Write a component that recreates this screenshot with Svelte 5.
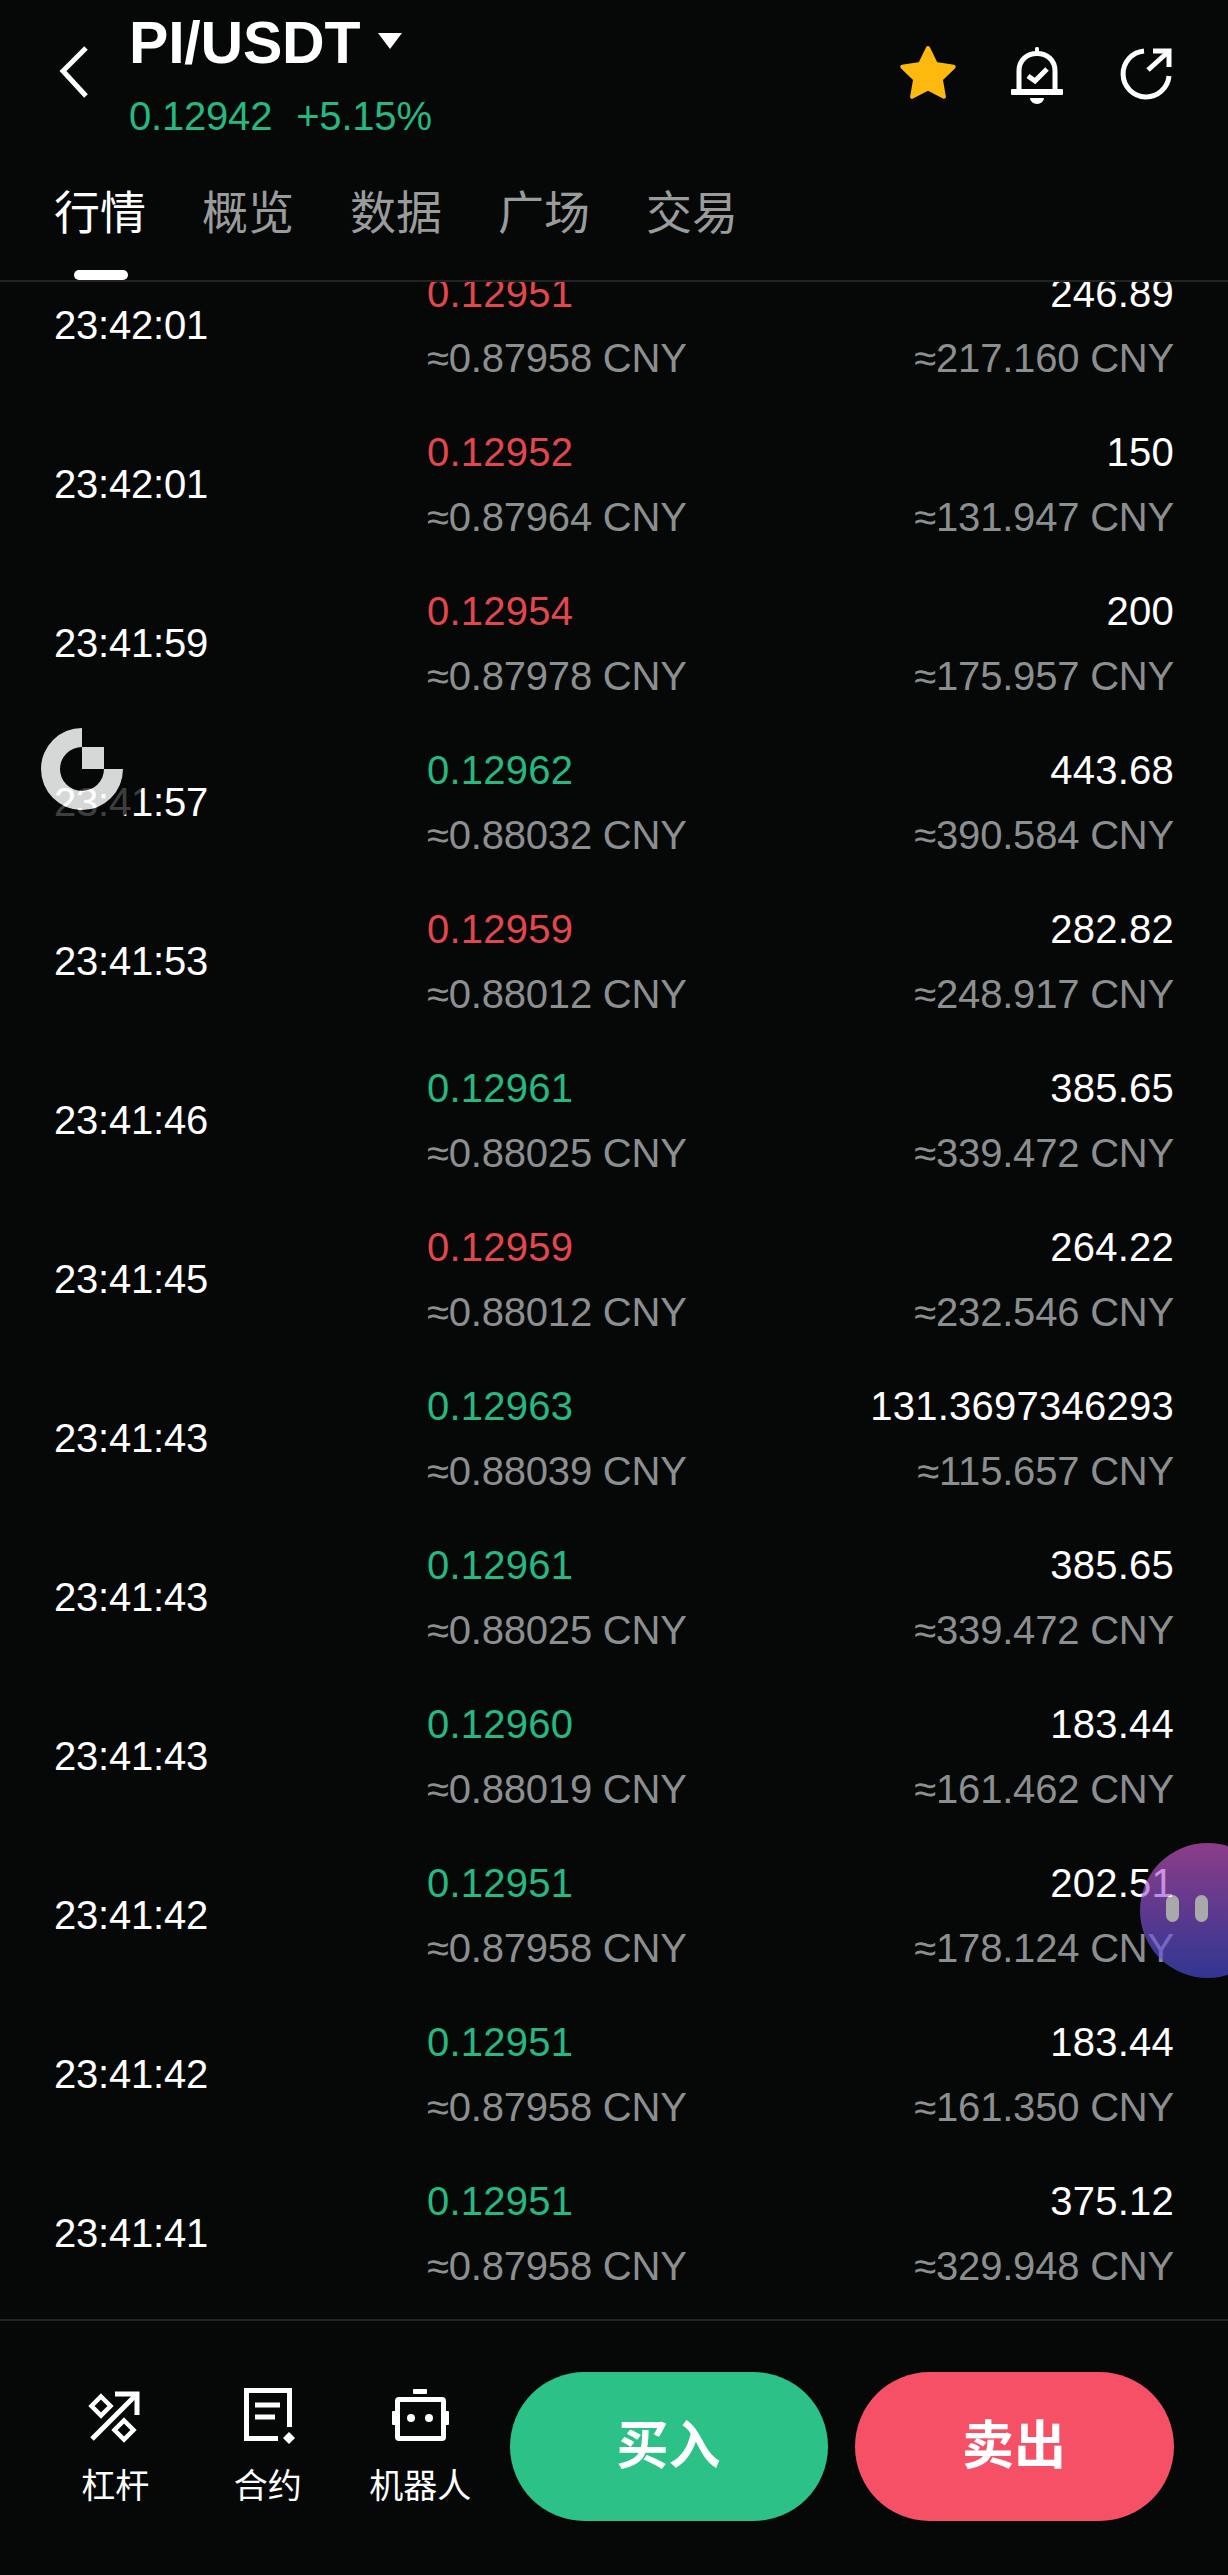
<script>
  const tabs = ["行情", "概览", "数据", "广场", "交易"];

  const trades = [
    { time: "23:42:01", price: "0.12951", side: "down", cny: "≈0.87958 CNY", amount: "246.89", total: "≈217.160 CNY" },
    { time: "23:42:01", price: "0.12952", side: "down", cny: "≈0.87964 CNY", amount: "150", total: "≈131.947 CNY" },
    { time: "23:41:59", price: "0.12954", side: "down", cny: "≈0.87978 CNY", amount: "200", total: "≈175.957 CNY" },
    { time: "23:41:57", price: "0.12962", side: "up", cny: "≈0.88032 CNY", amount: "443.68", total: "≈390.584 CNY" },
    { time: "23:41:53", price: "0.12959", side: "down", cny: "≈0.88012 CNY", amount: "282.82", total: "≈248.917 CNY" },
    { time: "23:41:46", price: "0.12961", side: "up", cny: "≈0.88025 CNY", amount: "385.65", total: "≈339.472 CNY" },
    { time: "23:41:45", price: "0.12959", side: "down", cny: "≈0.88012 CNY", amount: "264.22", total: "≈232.546 CNY" },
    { time: "23:41:43", price: "0.12963", side: "up", cny: "≈0.88039 CNY", amount: "131.3697346293", total: "≈115.657 CNY" },
    { time: "23:41:43", price: "0.12961", side: "up", cny: "≈0.88025 CNY", amount: "385.65", total: "≈339.472 CNY" },
    { time: "23:41:43", price: "0.12960", side: "up", cny: "≈0.88019 CNY", amount: "183.44", total: "≈161.462 CNY" },
    { time: "23:41:42", price: "0.12951", side: "up", cny: "≈0.87958 CNY", amount: "202.51", total: "≈178.124 CNY" },
    { time: "23:41:42", price: "0.12951", side: "up", cny: "≈0.87958 CNY", amount: "183.44", total: "≈161.350 CNY" },
    { time: "23:41:41", price: "0.12951", side: "up", cny: "≈0.87958 CNY", amount: "375.12", total: "≈329.948 CNY" }
  ];
</script>

<div class="page">
  <header class="header">
    <div class="top">
      <svg class="back" viewBox="0 0 36 56" aria-hidden="true">
        <path d="M31 5 L8 28 L31 53" />
      </svg>
      <div class="pair">
        <div class="title">
          <span>PI/USDT</span>
          <svg class="caret" viewBox="0 0 24 16" aria-hidden="true"><path d="M0 0 H24 L12 16 Z" /></svg>
        </div>
        <div class="quote"><span>0.12942</span><span>+5.15%</span></div>
      </div>
      <div class="actions">
        <svg viewBox="0 0 60 60" aria-hidden="true">
          <path class="star" d="M30 4 L37.9 20.1 L55.7 22.7 L42.8 35.2 L45.9 52.8 L30 44.5 L14.1 52.8 L17.2 35.2 L4.3 22.7 L22.1 20.1 Z" />
        </svg>
        <svg viewBox="0 0 60 60" aria-hidden="true">
          <path class="line" d="M12 46 V27 C12 16 20 9.5 30 9.5 C40 9.5 48 16 48 27 V46" />
          <rect class="solid" x="4" y="45" width="52" height="6" rx="1" />
          <rect class="solid" x="28" y="3" width="4" height="6" rx="1.5" />
          <path class="solid" d="M23 54 H37 A7 6 0 0 1 23 54 Z" />
          <path class="line" d="M21 32 L28 37 L40 25" />
        </svg>
        <svg viewBox="0 0 60 60" aria-hidden="true">
          <path class="line" d="M28 7 A23 23 0 1 0 53 32" />
          <path class="line" d="M32 26 L52 8" />
          <path class="line" d="M37 7 H53 V23" />
        </svg>
      </div>
    </div>
    <nav class="tabs">
      {#each tabs as tab, i}
        <div class="tab" class:active={i === 0}>{tab}</div>
      {/each}
    </nav>
  </header>

  <main class="list">
    <div class="rows">
      {#each trades as t}
        <div class="row">
          <div class="time">{t.time}</div>
          <div class="cell">
            <div class="main {t.side}">{t.price}</div>
            <div class="sub">{t.cny}</div>
          </div>
          <div class="cell right">
            <div class="main">{t.amount}</div>
            <div class="sub">{t.total}</div>
          </div>
        </div>
      {/each}
    </div>
  </main>

  <footer class="footer">
    <div class="tool">
      <svg viewBox="0 0 60 60" aria-hidden="true">
        <path class="line" d="M7 53 L52 8" />
        <path class="line" d="M30 8 H52 V29" />
        <path class="line thin" d="M16 10.5 L25.5 20 L16 29.5 L6.5 20 Z" />
        <path class="line thin" d="M39 34.5 L48.5 44 L39 53.5 L29.5 44 Z" />
      </svg>
      <span>杠杆</span>
    </div>
    <div class="tool">
      <svg viewBox="0 0 60 60" aria-hidden="true">
        <path class="line" d="M51.5 41 V4.5 H8.5 V52.5 H40" />
        <path class="line" d="M17 19 H42 M17 31 H37" />
        <path class="solid" d="M51 46 L57 52 L51 58 L45 52 Z" />
      </svg>
      <span>合约</span>
    </div>
    <div class="tool">
      <svg viewBox="0 0 60 60" aria-hidden="true">
        <rect class="line" x="7.5" y="13.5" width="46" height="39" rx="1.5" />
        <rect class="solid" x="23" y="3" width="14" height="5" rx="1" />
        <rect class="solid" x="2" y="25" width="5" height="14" rx="1" />
        <rect class="solid" x="54" y="25" width="5" height="14" rx="1" />
        <circle class="solid" cx="21" cy="32" r="4" />
        <circle class="solid" cx="39" cy="32" r="4" />
      </svg>
      <span>机器人</span>
    </div>
    <button class="trade buy"><span>买入</span></button>
    <button class="trade sell"><span>卖出</span></button>
  </footer>

  <div class="float-logo">
    <svg viewBox="0 0 128 128" aria-hidden="true">
      <path class="shade" fill-rule="evenodd" d="M1 64 A63 63 0 1 1 127 64 A63 63 0 1 1 1 64 Z M64 23 A41 41 0 1 0 105 64 H86 A22 22 0 1 1 64 42 Z" />
      <path class="mark" d="M64 23 A41 41 0 1 0 105 64 H86 A22 22 0 1 1 64 42 Z" />
      <rect class="mark" x="64" y="42" width="22" height="22" />
    </svg>
  </div>

  <div class="float-bot">
    <i></i><i></i>
  </div>
</div>

<style>
  :global(body) {
    margin: 0;
    background: #060808;
  }
  .page {
    position: relative;
    width: 1228px;
    height: 2575px;
    overflow: hidden;
    display: flex;
    flex-direction: column;
    background: #060808;
    color: #fff;
    font-family: "Liberation Sans", "Noto Sans CJK SC", sans-serif;
    font-size: 40px;
  }
  .header {
    flex: none;
    height: 282px;
    box-sizing: border-box;
    border-bottom: 2px solid #222424;
  }
  .top {
    display: flex;
    align-items: center;
    height: 144px;
    padding-right: 52px;
  }
  .back {
    width: 36px;
    height: 56px;
    margin-left: 55px;
    margin-right: 38px;
    margin-top: -2px;
  }
  .back path {
    fill: none;
    stroke: #fff;
    stroke-width: 5;
  }
  .pair {
    flex: 1;
    margin-top: 4px;
  }
  .title {
    display: flex;
    align-items: center;
    gap: 18px;
    font-size: 59px;
    font-weight: 700;
    line-height: 66px;
    letter-spacing: -0.2px;
  }
  .caret {
    width: 24px;
    height: 16px;
    margin-bottom: 4px;
  }
  .caret path {
    fill: #fff;
  }
  .quote {
    display: flex;
    gap: 24px;
    margin-top: 17px;
    line-height: 46px;
    color: #25b981;
    letter-spacing: -0.2px;
  }
  .actions {
    display: flex;
    gap: 49px;
    margin-top: 3px;
  }
  .actions svg {
    display: block;
    width: 60px;
    height: 60px;
  }
  .star {
    fill: #fdb90d;
    stroke: #fdb90d;
    stroke-width: 4;
    stroke-linejoin: round;
  }
  .line {
    fill: none;
    stroke: #fff;
    stroke-width: 5;
  }
  .line.thin {
    stroke-width: 4.5;
  }
  .solid {
    fill: #fff;
  }
  .tabs {
    display: flex;
    gap: 56px;
    padding-left: 54px;
  }
  .tab {
    position: relative;
    height: 136px;
    box-sizing: border-box;
    padding-top: 37px;
    font-size: 46px;
    line-height: 64px;
    color: #9a9c9c;
  }
  .tab.active {
    color: #fff;
  }
  .tab.active::after {
    content: "";
    position: absolute;
    left: 20px;
    bottom: 0;
    width: 54px;
    height: 10px;
    border-radius: 5px;
    background: #fff;
  }
  .list {
    flex: 1;
    overflow: hidden;
  }
  .rows {
    margin-top: -36px;
  }
  .row {
    display: flex;
    align-items: center;
    height: 159px;
    padding: 0 54px;
  }
  .time {
    width: 373px;
    flex: none;
    letter-spacing: -0.2px;
  }
  .cell {
    flex: 1;
    line-height: 65px;
  }
  .right {
    text-align: right;
  }
  .main {
    letter-spacing: 0.25px;
  }
  .up {
    color: #25b981;
  }
  .down {
    color: #e2474c;
  }
  .sub {
    color: #8c8f8f;
    letter-spacing: -0.2px;
  }
  .footer {
    flex: none;
    height: 256px;
    box-sizing: border-box;
    border-top: 2px solid #222424;
    display: flex;
    align-items: center;
    padding: 0 54px 0 39px;
  }
  .tool {
    width: 152.5px;
    flex: none;
    display: flex;
    flex-direction: column;
    align-items: center;
    font-size: 34px;
    line-height: 44px;
    margin-top: -2px;
  }
  .tool svg {
    width: 60px;
    height: 60px;
    margin-bottom: 18px;
  }
  .trade {
    width: 318px;
    height: 149px;
    padding: 0;
    border: none;
    border-radius: 75px;
    color: #fff;
    font-family: inherit;
    font-size: 52px;
    font-weight: 700;
    margin-top: -3px;
  }
  .trade span {
    position: relative;
    top: -5px;
  }
  .buy {
    margin-left: 13px;
    background: #2cc187;
  }
  .sell {
    margin-left: 27px;
    width: 319px;
    background: #f55066;
  }
  .float-logo {
    position: absolute;
    left: 18px;
    top: 705px;
    width: 128px;
    height: 128px;
  }
  .float-logo svg {
    display: block;
    width: 100%;
    height: 100%;
  }
  .shade {
    fill: rgba(6, 8, 8, 0.78);
  }
  .mark {
    fill: #fff;
    fill-opacity: 0.84;
  }
  .float-bot {
    position: absolute;
    left: 1140px;
    top: 1843px;
    width: 135px;
    height: 135px;
    border-radius: 50%;
    background: linear-gradient(180deg, #d459ce, #4750de);
    opacity: 0.65;
  }
  .float-bot i {
    position: absolute;
    top: 52px;
    width: 13px;
    height: 27px;
    border-radius: 7px;
    background: #fff;
  }
  .float-bot i:first-child {
    left: 26px;
  }
  .float-bot i:last-child {
    left: 55px;
  }
</style>
